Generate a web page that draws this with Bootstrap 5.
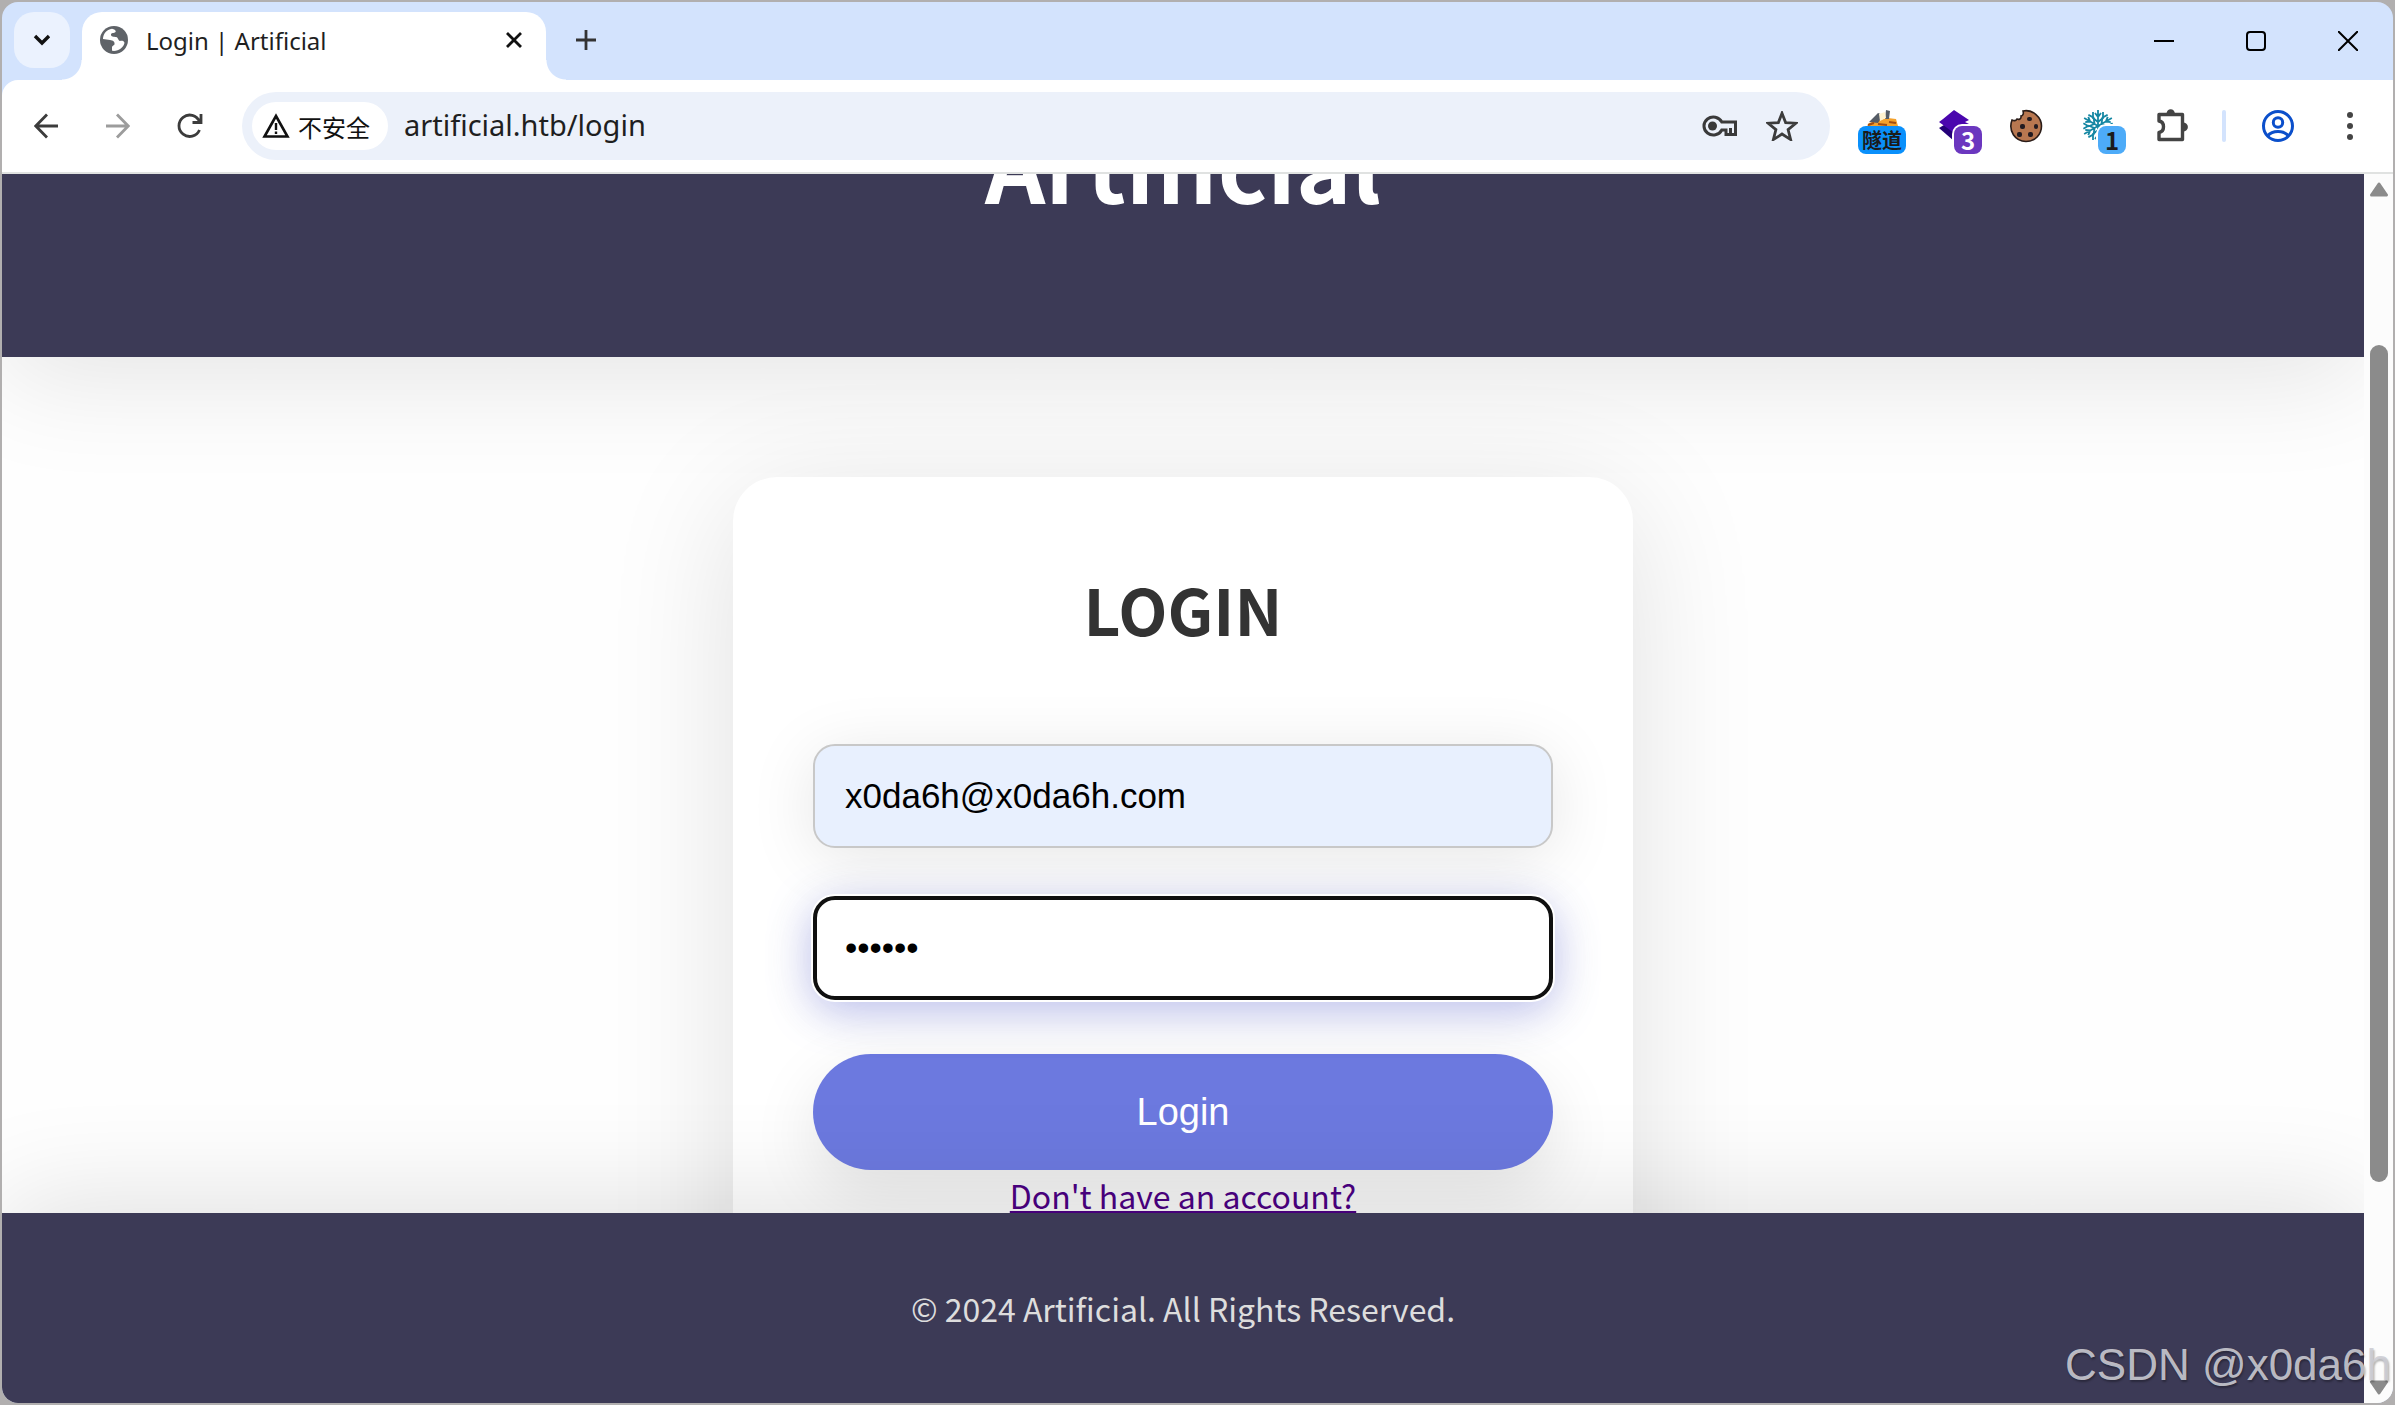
<!DOCTYPE html>
<html lang="en">
<head>
<meta charset="utf-8">
<meta name="viewport" content="width=device-width, initial-scale=1">
<title>Login | Artificial</title>
<link href="https://cdn.jsdelivr.net/npm/bootstrap@5.3.0/dist/css/bootstrap.min.css" rel="stylesheet">
<style>
  body { background: #b1afaf; height: 100vh; overflow: hidden; padding: 2px; font-family: "Noto Sans CJK SC", sans-serif; }
  button { border: 0; background: none; padding: 0; }
  svg { display: block; flex: none; }
  .browser { height: 100%; border-radius: 16px; overflow: hidden; background: #d3e3fd; }
  .chrome-ui { font-family: "Noto Sans", "Noto Sans CJK SC", sans-serif; }
  .tabstrip { height: 78px; padding: 10px 0 0 12px; }
  .tab-search { width: 56px; height: 56px; border-radius: 20px; background: #ebf2fe; margin-right: 12px; }
  .page-tab { width: 464px; height: 68px; background: #fff; border-radius: 20px 20px 0 0; padding: 0 22px 12px 18px; position: relative; font-size: 24px; line-height: 32px; color: #1f1f1f; }
  .page-tab::before, .page-tab::after { content: ""; position: absolute; bottom: 0; width: 20px; height: 20px; }
  .page-tab::before { left: -20px; background: radial-gradient(circle at 0 0, transparent 19px, #fff 20px); }
  .page-tab::after { right: -20px; background: radial-gradient(circle at 100% 0, transparent 19px, #fff 20px); }
  .tab-title { margin-left: 18px; padding-top: 2px; }
  .new-tab { width: 80px; height: 56px; }
  .win-btn { width: 92px; height: 58px; padding-left: 2px; }
  .toolbar { height: 94px; background: #fff; border-bottom: 2px solid #e0e2e1; border-top-left-radius: 16px; padding: 0 7px 0 8px; }
  .tool { width: 72px; height: 68px; position: relative; }
  .omnibox { height: 68px; border-radius: 34px; background: #ecf1fa; margin: 0 16px; padding: 0 32px 0 10px; }
  .chip { height: 48px; width: 136px; border-radius: 24px; background: #fff; padding-left: 10px; font-size: 24px; line-height: 48px; color: #111; }
  .address { border: 0; background: none; outline: 0; font-size: 29px; line-height: 40px; color: #1f1f1f; padding: 0 0 2px; margin-left: 16px; min-width: 0; }
  .ext-count { position: absolute; top: 34px; height: 28px; border-radius: 8px; font-family: "Noto Sans CJK SC", sans-serif; font-size: 24px; line-height: 28px; font-weight: 700; text-align: center; }
  .ext-tunnel { left: 12px; width: 48px; background: #0a90fb; color: #1b1b1b; }
  .ext-purple { left: 36px; width: 28px; background: #6b37bf; color: #fff; box-shadow: 0 0 0 2px #fff; }
  .ext-blue { left: 36px; width: 28px; background: #4dabf8; color: #1b1b1b; box-shadow: 0 0 0 2px #fff; }
  .ext-tunnel { font-size: 20px; }
  .tool-rule { width: 4px; height: 32px; border-radius: 2px; background: #d3e3fd; margin: 0 16px; }
  .site { background: #fefefe; min-width: 0; }
  .site-header { height: 183px; overflow: hidden; background: #3c3a56; box-shadow: 0 22px 110px rgba(0,0,0,.1); padding-bottom: 134px; }
  .site-header h1 { font-size: 94px; line-height: 120px; font-weight: 700; color: #fff; margin: 0; }
  .site-main { min-height: 0; padding-top: 120px; }
  .login-box { width: 900px; height: 900px; flex: none; border-radius: 44px; background: #fff; padding: 80px; box-shadow: 0 22px 130px rgba(0,0,0,.12); position: relative; }
  .login-box h2 { font-size: 64px; line-height: 96px; font-weight: 700; color: #333; margin: 3px 0 88px; }
  .field { width: 100%; height: 104px; border-radius: 22px; border: 2px solid #c8c8c8; padding: 0 30px; font-family: "Liberation Sans", sans-serif; font-size: 35px; color: #000; outline: 0; }
  .field-email { background: #e8f0fe; box-shadow: 0 10px 66px rgba(0,0,0,.1); margin-bottom: 48px; }
  .field-pass { background: #fff; border: 4px solid #101010; padding: 0 28px; box-shadow: 0 0 0 2px #fff, 0 10px 44px rgba(98,108,225,.4), 0 10px 66px rgba(0,0,0,.06); margin-bottom: 54px; position: relative; }
  .btn-login { width: 100%; height: 116px; border-radius: 58px; background: #6c79df; color: #fff; font-family: "Liberation Sans", sans-serif; font-size: 38px; box-shadow: 0 22px 66px rgba(0,0,0,.1); }
  .join { font-size: 32px; line-height: 50px; color: #4b0082; text-decoration: underline; }
  .site-footer { height: 190px; background: #3c3a56; color: #ddd; font-size: 32px; line-height: 52px; box-shadow: 0 -11px 110px rgba(0,0,0,.12); position: relative; }
  .scrollbar { width: 29px; background: #fcfcfc; padding: 8px 0; position: relative; z-index: 1; }
  .thumb { width: 18px; flex: 837 0 0; margin: 148px 0 0; border-radius: 9px; background: #8b8b8b; }
  .thumb-rest { flex: 198 0 0; }
  .watermark { position: absolute; right: 4px; bottom: 16px; z-index: 2; font-family: "Liberation Sans", sans-serif; font-size: 44px; line-height: 48px; color: rgba(205,205,212,.9); text-shadow: 1px 2px 2px rgba(0,0,0,.3); }
</style>
<script src="https://cdn.jsdelivr.net/npm/bootstrap@5.3.0/dist/js/bootstrap.bundle.min.js"></script>
</head>
<body>
<div class="browser d-flex flex-column">
  <div class="chrome-ui">
    <div class="tabstrip d-flex">
      <button class="tab-search d-flex align-items-center justify-content-center" aria-label="Search tabs"><svg width="18" height="12" viewBox="0 0 18 12" fill="none" stroke="#111" stroke-width="3.4"><path d="M2 2l7 7 7-7"/></svg></button>
      <div class="page-tab d-flex align-items-center">
        <svg width="28" height="28" viewBox="0 0 28 28"><circle cx="14" cy="14" r="14" fill="#5f6368"/><path fill="#fff" d="M12 2.7C6.500 3.500 3 8 3 13l7 1c3 .5 5 1.500 4.500 4.500-.5 1-2.500 1-2.500 3v3.300c6 1 11.500-3 12.500-8-1-2.300-3-2-4.500-1.800-2-.2-1.500-3.500-4-4-2.500-.3-5 0-5-2.500 0-2 3-1 4.500-2.500C16.500 4.500 14 3 12 2.700z"/><path d="M3 14l7 8v-3c-3-.5-3-3-7-5z" fill="#5f6368"/></svg>
        <span class="tab-title flex-grow-1">Login | Artificial</span>
        <button aria-label="Close tab"><svg width="20" height="20" viewBox="0 0 20 20" stroke="#111" stroke-width="2.800"><path d="M3 3l14 14M17 3L3 17"/></svg></button>
      </div>
      <button class="new-tab d-flex align-items-center justify-content-center" aria-label="New tab"><svg width="20" height="20" viewBox="0 0 20 20" stroke="#333" stroke-width="2.800"><path d="M10 0v20M0 10h20"/></svg></button>
      <div class="ms-auto d-flex">
        <button class="win-btn d-flex align-items-center justify-content-center" aria-label="Minimize"><svg width="20" height="20"><path d="M0 10h20" stroke="#000" stroke-width="2"/></svg></button>
        <button class="win-btn d-flex align-items-center justify-content-center" aria-label="Maximize"><svg width="20" height="20"><rect x="1" y="1" width="18" height="18" rx="3" fill="none" stroke="#000" stroke-width="2"/></svg></button>
        <button class="win-btn d-flex align-items-center justify-content-center" aria-label="Close"><svg width="20" height="20" stroke="#000" stroke-width="2"><path d="M0 0l20 20M20 0L0 20"/></svg></button>
      </div>
    </div>
    <div class="toolbar d-flex align-items-center">
      <button class="tool d-flex align-items-center justify-content-center" aria-label="Back"><svg width="24" height="26" viewBox="0 0 24 26" fill="none" stroke="#3c3c3c" stroke-width="2.800"><path d="M24 13H2M13 1.500L1.800 13 13 24.500"/></svg></button>
      <button class="tool d-flex align-items-center justify-content-center" aria-label="Forward"><svg width="24" height="26" viewBox="0 0 24 26" fill="none" stroke="#9c9c9c" stroke-width="2.800"><path d="M0 13h22M11 1.500L22.200 13 11 24.500"/></svg></button>
      <button class="tool d-flex align-items-center justify-content-center" aria-label="Reload"><svg width="26" height="26" viewBox="0 0 26 26" fill="none" stroke="#3c3c3c" stroke-width="2.800"><path d="M22.500 17A10.700 10.700 0 1 1 22.500 8.500M24 1v8.500h-8.500"/></svg></button>
      <div class="omnibox flex-grow-1 d-flex align-items-center">
        <button class="chip d-flex align-items-center"><svg width="28" height="26" viewBox="0 0 28 26"><path d="M14 3L2.500 23.500h23z" fill="none" stroke="#111" stroke-width="2.600"/><path d="M14 10v7M14 18.500v2.600" stroke="#111" stroke-width="2.400"/></svg><span class="ms-2 pt-1">不安全</span></button>
        <input class="address flex-grow-1" type="text" value="artificial.htb/login" aria-label="Address">
        <button class="me-4" aria-label="Passwords"><svg width="36" height="22" viewBox="0 0 36 22" fill="none" stroke="#3a3a3a" stroke-width="3"><path d="M19.800 7A9.400 9 0 1 0 19.800 15H24v4.500h9.500V7z"/><circle cx="10.500" cy="11" r="4.500" fill="#3a3a3a" stroke="none"/><path d="M28.500 13v5"/></svg></button>
        <button class="ms-1" aria-label="Bookmark"><svg width="32" height="30" viewBox="1 1 30 28" fill="none" stroke="#3c3c3c" stroke-width="2.600"><path d="M16 3l3.400 8.800 9.600.6-7.300 6 2.400 9.300-8.100-5.200-8.100 5.200 2.400-9.300-7.300-6 9.600-.6z"/></svg></button>
      </div>
      <button class="tool" aria-label="Tunnel proxy"><svg class="mx-auto" width="34" height="68" viewBox="0 0 34 68"><path d="M1 36l3-5 10-3 9-2 8 1 2 7v4H1z" fill="#f3a12c"/><path d="M4 30l9-9 5 2-5 8zM21 18l4 1-1 8h-4z" fill="#555c66"/><path d="M14 22l6-2 1 6-6 3z" fill="#fff2cf"/><path d="M13 32l9 1M24 30l7 1M3 33l6-2" stroke="#a24d12" stroke-width="2"/></svg><span class="ext-count ext-tunnel">隧道</span></button>
      <button class="tool" aria-label="Layers"><svg class="mx-auto" width="34" height="68" viewBox="0 0 34 68"><path d="M2 36l15-9 15 9-15 13z" fill="#240078"/><path d="M17 18l15 10-4 2 4 2-15 9L2 30l4-3z" fill="#4a06ae"/></svg><span class="ext-count ext-purple">3</span></button>
      <button class="tool d-flex align-items-center justify-content-center" aria-label="Cookies"><svg width="34" height="34" viewBox="0 0 34 34"><path d="M14 2c1 3-.5 5-2 5 .5 3-2 4-4 3-1 2-3 2-5 1C-1 22 6 32 17 32.500c9 0 15.500-7 15.500-15.500S24 0 14 2z" fill="#b87750" stroke="#2a1c18" stroke-width="1.600"/><g fill="#221a20"><rect x="18" y="8" width="5" height="4" rx="2"/><rect x="11" y="15" width="5" height="5" rx="2"/><rect x="25" y="15" width="4" height="5" rx="2"/><rect x="8" y="23" width="5" height="5" rx="2"/><rect x="19" y="23" width="5" height="5" rx="2"/></g></svg></button>
      <button class="tool" aria-label="Snowflake"><svg class="mx-auto" width="34" height="68" viewBox="0 0 34 68"><g transform="translate(17 34)" stroke="#1687a3" stroke-width="1.800" fill="none"><g id="arm"><path d="M0 0v-16M0-4l5-4v-6M0-4l-5-4v-6M0-9l3-4M0-9l-3-4"/></g><use href="#arm" transform="rotate(60)"/><use href="#arm" transform="rotate(120)"/><use href="#arm" transform="rotate(180)"/><use href="#arm" transform="rotate(240)"/><use href="#arm" transform="rotate(300)"/></g></svg><span class="ext-count ext-blue">1</span></button>
      <button class="tool d-flex align-items-center justify-content-center" aria-label="Extensions"><svg class="ms-1" width="34" height="36" viewBox="0 0 34 36"><path d="M4 6.500h23.500v25H4v-7c6-1 6-10.500 0-11.500z" fill="none" stroke="#444" stroke-width="3.400" stroke-linejoin="round"/><path d="M11.500 6a4.200 4.800 0 0 1 8.400 0zM28 14.500a4.800 4.400 0 0 1 0 9z" fill="#444"/></svg></button>
      <div class="tool-rule"></div>
      <button class="tool d-flex align-items-center justify-content-center" aria-label="Profile"><svg width="34" height="34" viewBox="0 0 34 34" fill="none" stroke="#0b4fcb" stroke-width="3"><circle cx="17" cy="17" r="14.500"/><circle cx="17" cy="13.500" r="4.700"/><path d="M6.500 27c5-6 16-6 21 0"/></svg></button>
      <button class="tool d-flex align-items-center justify-content-center" aria-label="Menu"><svg width="6" height="28" viewBox="0 0 6 28" fill="#444"><circle cx="3" cy="3" r="3"/><circle cx="3" cy="14" r="3"/><circle cx="3" cy="25" r="3"/></svg></button>
    </div>
  </div>
  <div class="d-flex flex-grow-1 overflow-hidden">
    <div class="site d-flex flex-column flex-grow-1 overflow-hidden">
      <header class="site-header flex-shrink-0 d-flex align-items-end justify-content-center"><h1>Artificial</h1></header>
      <main class="site-main flex-fill d-flex flex-column align-items-center">
        <form class="login-box text-center" onsubmit="return false">
          <h2>LOGIN</h2>
          <input class="field field-email d-block" type="email" value="x0da6h@x0da6h.com" aria-label="Email">
          <input class="field field-pass d-block" type="password" value="secret" aria-label="Password">
          <button class="btn-login d-block" type="submit">Login</button>
          <a class="join d-block" href="#">Don't have an account?</a>
        </form>
      </main>
      <footer class="site-footer flex-shrink-0 d-flex align-items-center justify-content-center">© 2024 Artificial. All Rights Reserved.</footer>
    </div>
    <div class="scrollbar d-flex flex-column align-items-center">
      <svg width="20" height="15" viewBox="0 0 20 15"><path d="M10 2l7.500 11h-15z" fill="#8b8b8b" stroke="#8b8b8b" stroke-width="3" stroke-linejoin="round"/></svg>
      <div class="thumb"></div>
      <div class="thumb-rest"></div>
      <svg width="20" height="15" viewBox="0 0 20 15"><path d="M10 13L2.500 2h15z" fill="#8b8b8b" stroke="#8b8b8b" stroke-width="3" stroke-linejoin="round"/></svg>
    </div>
  </div>
</div>
<div class="watermark">CSDN @x0da6h</div>
</body>
</html>
